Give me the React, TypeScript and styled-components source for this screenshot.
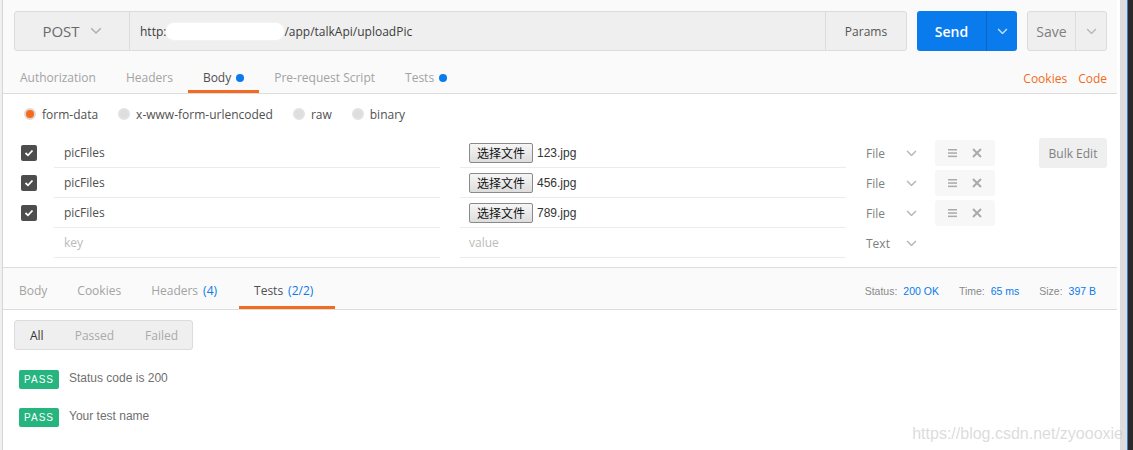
import React from "react";
import styled, { createGlobalStyle } from "styled-components";

const GlobalStyle = createGlobalStyle`
  html, body {
    margin: 0;
    padding: 0;
    background: #ffffff;
  }
  body {
    font-family: "Open Sans", "Noto Sans", sans-serif;
    font-size: 12px;
    color: #505050;
  }
  * {
    box-sizing: border-box;
  }
`;

const Chevron = ({ color = "#aaa", size = 11 }: { color?: string; size?: number }) => (
  <svg width={size} height={size * 0.6} viewBox="0 0 10 6" fill="none">
    <polyline points="1,1 5,5 9,1" stroke={color} strokeWidth="1.3" />
  </svg>
);

const CheckIcon = () => (
  <svg width="10" height="8" viewBox="0 0 10 8" fill="none">
    <polyline points="1.5,4 4,6.3 8.5,1.5" stroke="#fff" strokeWidth="1.8" />
  </svg>
);

const MenuIcon = () => (
  <svg width="9" height="10" viewBox="0 0 9 10">
    <rect x="0" y="1" width="9" height="1.5" fill="#aaa" />
    <rect x="0" y="4.3" width="9" height="1.5" fill="#aaa" />
    <rect x="0" y="7.6" width="9" height="1.5" fill="#aaa" />
  </svg>
);

const CloseIcon = () => (
  <svg width="10" height="10" viewBox="0 0 10 10">
    <path d="M1 1 L9 9 M9 1 L1 9" stroke="#aaa" strokeWidth="2" />
  </svg>
);

const rows = [
  { key: "picFiles", file: "123.jpg" },
  { key: "picFiles", file: "456.jpg" },
  { key: "picFiles", file: "789.jpg" },
];

const App = (): JSX.Element => {
  return (
    <Page>
      <GlobalStyle />
      <LeftEdge />
      <Main>
        <RequestArea>
          <RequestRow>
            <UrlGroup>
              <MethodBox>
                <span>POST</span>
                <Chevron color="#b0b0b0" size={12} />
              </MethodBox>
              <UrlBox>
                http:<Redacted />/app/talkApi/uploadPic
              </UrlBox>
              <ParamsButton>Params</ParamsButton>
            </UrlGroup>
            <SendButton>
              <span>Send</span>
              <SplitArrow $divider="#0a66c6">
                <Chevron color="#c7defa" size={11} />
              </SplitArrow>
            </SendButton>
            <SaveButton>
              <span>Save</span>
              <SplitArrow $divider="#dcdcdc">
                <Chevron color="#b8b8b8" size={11} />
              </SplitArrow>
            </SaveButton>
          </RequestRow>
          <TabBar>
            <TabList>
              <Tab>Authorization</Tab>
              <Tab>Headers</Tab>
              <Tab $active>
                Body <Dot />
              </Tab>
              <Tab>Pre-request Script</Tab>
              <Tab>
                Tests <Dot />
              </Tab>
            </TabList>
            <Links>
              <span>Cookies</span>
              <span>Code</span>
            </Links>
          </TabBar>
        </RequestArea>

        <BodyArea>
          <RadioRow>
            <RadioItem>
              <Radio $checked />
              form-data
            </RadioItem>
            <RadioItem>
              <Radio />
              x-www-form-urlencoded
            </RadioItem>
            <RadioItem>
              <Radio />
              raw
            </RadioItem>
            <RadioItem>
              <Radio />
              binary
            </RadioItem>
          </RadioRow>

          <Table>
            {rows.map((r, i) => (
              <Row key={i}>
                <CheckCell>
                  <Checkbox>
                    <CheckIcon />
                  </Checkbox>
                </CheckCell>
                <KeyCell>{r.key}</KeyCell>
                <ValueCell>
                  <FileButton>选择文件</FileButton>
                  <FileName>{r.file}</FileName>
                </ValueCell>
                <TypeCell>
                  <span>File</span>
                  <Chevron color="#b5b5b5" size={11} />
                </TypeCell>
                <Actions>
                  <MenuIcon />
                  <CloseIcon />
                </Actions>
                {i === 0 && <BulkEdit>Bulk Edit</BulkEdit>}
              </Row>
            ))}
            <Row>
              <CheckCell />
              <KeyCell $placeholder>key</KeyCell>
              <ValueCell $placeholder>value</ValueCell>
              <TypeCell>
                <span>Text</span>
                <Chevron color="#b5b5b5" size={11} />
              </TypeCell>
            </Row>
          </Table>
        </BodyArea>

        <ResponseBar>
          <TabList>
            <ResTab>Body</ResTab>
            <ResTab>Cookies</ResTab>
            <ResTab>
              Headers <Count>(4)</Count>
            </ResTab>
            <ResTab $active>
              Tests <Count>(2/2)</Count>
            </ResTab>
          </TabList>
          <Meta>
            <MetaItem>
              Status: <b>200 OK</b>
            </MetaItem>
            <MetaItem>
              Time: <b>65 ms</b>
            </MetaItem>
            <MetaItem>
              Size: <b>397 B</b>
            </MetaItem>
          </Meta>
        </ResponseBar>

        <TestsArea>
          <FilterGroup>
            <FilterButton $active>All</FilterButton>
            <FilterButton>Passed</FilterButton>
            <FilterButton>Failed</FilterButton>
          </FilterGroup>
          <Results>
            <Result>
              <PassBadge>PASS</PassBadge>
              <ResultText>Status code is 200</ResultText>
            </Result>
            <Result>
              <PassBadge>PASS</PassBadge>
              <ResultText>Your test name</ResultText>
            </Result>
          </Results>
          <Watermark>https://blog.csdn.net/zyoooxie</Watermark>
        </TestsArea>
      </Main>
      <Gutter />
      <Scrollbar />
      <WindowEdge />
    </Page>
  );
};

export default App;

const Page = styled.div`
  display: flex;
  width: 1133px;
  height: 450px;
  overflow: hidden;
`;

const LeftEdge = styled.div`
  width: 3px;
  background: #f0f0f0;
  border-right: 1px solid #d6d6d6;
`;

const Main = styled.div`
  position: relative;
  width: 1114px;
  display: flex;
  flex-direction: column;
  background: #ffffff;
`;

const Gutter = styled.div`
  width: 3px;
  background: #ffffff;
`;

const Scrollbar = styled.div`
  width: 7px;
  background: #dedede;
`;

const WindowEdge = styled.div`
  width: 6px;
  background: #2a2a2a;
  border-left: 1px solid #2f86d6;
`;

const RequestArea = styled.div`
  background: #fafafa;
  padding: 11px 10px 0 11px;
  border-bottom: 1px solid #dddddd;
`;

const RequestRow = styled.div`
  display: flex;
  height: 40px;
  column-gap: 10px;
`;

const UrlGroup = styled.div`
  flex: 1;
  display: flex;
  background: #efefef;
  border: 1px solid #dcdcdc;
  border-radius: 3px;
`;

const MethodBox = styled.div`
  width: 115px;
  display: flex;
  align-items: center;
  justify-content: center;
  column-gap: 10px;
  border-right: 1px solid #dcdcdc;
  font-size: 15px;
  color: #6a6a6a;
`;

const UrlBox = styled.div`
  flex: 1;
  display: flex;
  align-items: center;
  padding-left: 10px;
  font-size: 12px;
  color: #3c3c3c;
`;

const Redacted = styled.span`
  display: inline-block;
  width: 118px;
  height: 17px;
  border-radius: 9px;
  background: #ffffff;
  box-shadow: 0 0 2px #ffffff;
`;

const ParamsButton = styled.div`
  width: 81px;
  display: flex;
  align-items: center;
  justify-content: center;
  border-left: 1px solid #dcdcdc;
  font-size: 12px;
  color: #555555;
`;

const SendButton = styled.div`
  width: 100px;
  display: flex;
  align-items: stretch;
  background: #097bed;
  border-radius: 3px;
  color: #ffffff;
  font-size: 14px;
  font-weight: 600;

  span {
    flex: 1;
    display: flex;
    align-items: center;
    justify-content: center;
  }
`;

const SaveButton = styled.div`
  width: 80px;
  display: flex;
  align-items: stretch;
  background: #efefef;
  border: 1px solid #dcdcdc;
  border-radius: 3px;
  color: #808080;
  font-size: 14px;

  span {
    flex: 1;
    display: flex;
    align-items: center;
    justify-content: center;
  }
`;

const SplitArrow = styled.div<{ $divider: string }>`
  width: 31px;
  display: flex;
  align-items: center;
  justify-content: center;
  border-left: 1px solid ${(p) => p.$divider};
`;

const TabBar = styled.div`
  margin-top: 11px;
  margin-left: -10px;
  display: flex;
  justify-content: space-between;
  align-items: stretch;
  height: 31px;
`;

const TabList = styled.div`
  display: flex;
  padding-left: 1px;
`;

const Tab = styled.div<{ $active?: boolean }>`
  display: flex;
  align-items: center;
  column-gap: 5px;
  padding: 0 15px;
  color: ${(p) => (p.$active ? "#505050" : "#a3a3a3")};
  border-bottom: 3px solid ${(p) => (p.$active ? "#f26b21" : "transparent")};
  padding-top: 3px;
`;

const Dot = styled.span`
  display: inline-block;
  width: 8px;
  height: 8px;
  border-radius: 50%;
  background: #097bed;
`;

const Links = styled.div`
  display: flex;
  align-items: center;
  column-gap: 11px;
  color: #f26b21;
  padding-top: 2px;
`;

const BodyArea = styled.div`
  padding: 12px 0 9px 21px;
  background: #ffffff;
`;

const RadioRow = styled.div`
  display: flex;
  align-items: center;
  column-gap: 20px;
  height: 16px;
`;

const RadioItem = styled.label`
  display: flex;
  align-items: center;
  column-gap: 6px;
  color: #505050;
`;

const Radio = styled.span<{ $checked?: boolean }>`
  display: inline-block;
  width: 12px;
  height: 12px;
  border-radius: 50%;
  background: ${(p) => (p.$checked ? "#f26b21" : "#dedede")};
  border: 2px solid ${(p) => (p.$checked ? "#e4d7cf" : "#e2e2e2")};
`;

const Table = styled.div`
  margin-top: 16px;
  display: flex;
  flex-direction: column;
`;

const Row = styled.div`
  display: flex;
  align-items: stretch;
  height: 30px;
`;

const CheckCell = styled.div`
  width: 30px;
  display: flex;
  align-items: center;
`;

const Checkbox = styled.span`
  width: 16px;
  height: 16px;
  margin-left: -3px;
  border-radius: 2px;
  background: #4d4d4d;
  display: flex;
  align-items: center;
  justify-content: center;
`;

const KeyCell = styled.div<{ $placeholder?: boolean }>`
  width: 386px;
  display: flex;
  align-items: center;
  padding-left: 10px;
  border-bottom: 1px solid #ececec;
  color: ${(p) => (p.$placeholder ? "#bbbbbb" : "#505050")};
`;

const ValueCell = styled(KeyCell)`
  margin-left: 20px;
  padding-left: 9px;
  column-gap: 4px;
`;

const FileButton = styled.span`
  height: 20px;
  width: 64px;
  display: flex;
  align-items: center;
  justify-content: center;
  border: 1px solid #8a8a8a;
  border-radius: 2px;
  background: linear-gradient(#f6f6f6, #dddddd);
  font-family: "Noto Sans CJK SC", sans-serif;
  font-size: 12px;
  color: #111111;
`;

const FileName = styled.span`
  font-family: "Liberation Sans", Arial, sans-serif;
  font-size: 12px;
  color: #333333;
`;

const TypeCell = styled.div`
  width: 69px;
  margin-left: 20px;
  display: flex;
  align-items: center;
  justify-content: space-between;
  padding-right: 18px;
  color: #808080;
`;

const Actions = styled.div`
  width: 60px;
  height: 26px;
  margin: 2px 0 0 0;
  display: flex;
  align-items: center;
  justify-content: space-around;
  padding: 0 6px;
  background: #f7f7f7;
  border-radius: 3px;
`;

const BulkEdit = styled.div`
  margin-left: 44px;
  width: 68px;
  height: 30px;
  display: flex;
  align-items: center;
  justify-content: center;
  background: #efefef;
  border-radius: 3px;
  color: #808080;
`;

const ResponseBar = styled.div`
  display: flex;
  justify-content: space-between;
  height: 43px;
  background: #fafafa;
  border-top: 1px solid #dddddd;
  border-bottom: 1px solid #dddddd;
`;

const ResTab = styled.div<{ $active?: boolean }>`
  display: flex;
  align-items: center;
  column-gap: 5px;
  padding: 6px 15px 0;
  color: ${(p) => (p.$active ? "#505050" : "#a3a3a3")};
  border-bottom: 3px solid ${(p) => (p.$active ? "#f26b21" : "transparent")};
`;

const Count = styled.span`
  color: #097bed;
  margin-right: 7px;
`;

const Meta = styled.div`
  display: flex;
  align-items: center;
  column-gap: 20px;
  padding: 4px 21px 0 0;
  font-family: "Liberation Sans", Arial, sans-serif;
  font-size: 10.5px;
  color: #8a8a8a;
`;

const MetaItem = styled.span`
  b {
    font-weight: normal;
    color: #097bed;
    margin-left: 3px;
  }
`;

const TestsArea = styled.div`
  flex: 1;
  padding: 10px 0 0 11px;
  background: #ffffff;
`;

const FilterGroup = styled.div`
  display: inline-flex;
  align-items: center;
  column-gap: 31px;
  height: 30px;
  width: 179px;
  padding-left: 15px;
  background: #efefef;
  border: 1px solid #dcdcdc;
  border-radius: 3px;
  font-size: 12px;
`;

const FilterButton = styled.span<{ $active?: boolean }>`
  color: ${(p) => (p.$active ? "#333333" : "#aaaaaa")};
`;

const Results = styled.div`
  margin-top: 20px;
  display: flex;
  flex-direction: column;
  row-gap: 19px;
  padding-left: 5px;
`;

const Result = styled.div`
  display: flex;
  align-items: center;
  column-gap: 10px;
  height: 19px;
`;

const PassBadge = styled.span`
  width: 40px;
  height: 19px;
  display: flex;
  align-items: center;
  justify-content: center;
  background: #26b47f;
  border-radius: 2px;
  color: #ffffff;
  font-family: "Liberation Sans", Arial, sans-serif;
  font-size: 10px;
  letter-spacing: 1px;
`;

const ResultText = styled.span`
  font-family: "Liberation Sans", Arial, sans-serif;
  font-size: 12px;
  color: #707070;
  margin-top: -4px;
`;

const Watermark = styled.div`
  position: absolute;
  right: -6px;
  bottom: 7px;
  font-family: "Liberation Sans", Arial, sans-serif;
  font-size: 16px;
  color: rgba(190, 190, 190, 0.55);
  pointer-events: none;
`;
